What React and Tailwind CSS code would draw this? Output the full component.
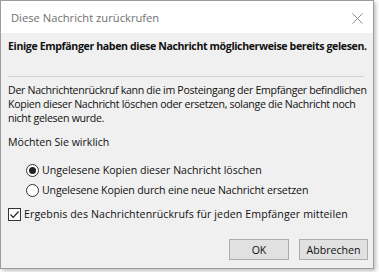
export default function App() {
  return (
    <div className="w-[379px] h-[272px] bg-white overflow-hidden" style={{ fontFamily: '"Open Sans", "Noto Sans", sans-serif' }}>
      <div className="w-[374px] h-[269px] flex flex-col bg-[#f0f0f0] border border-[#9c9c9c] shadow-[2px_2px_4px_rgba(0,0,0,0.25)]">
        {/* Title bar */}
        <div className="h-[32px] bg-white flex items-center justify-between pl-[10px] pr-[10px] shrink-0">
          <span className="text-[11.2px] text-[#6f6f6f] mt-[2px]">Diese Nachricht zurückrufen</span>
          <svg width="11" height="11" viewBox="0 0 11 11" className="mt-[2px]">
            <path d="M0.5 0.5 L10.5 10.5 M10.5 0.5 L0.5 10.5" stroke="#8a8a8a" strokeWidth="1" fill="none" />
          </svg>
        </div>

        <div className="flex flex-col px-[7px] text-[10.6px] text-[#111] leading-[14px] whitespace-nowrap">
          <p className="font-bold mt-[6px] tracking-[-0.38px]">Einige Empfänger haben diese Nachricht möglicherweise bereits gelesen.</p>
          <div className="h-px bg-[#d4d4d4] mt-[23px] mr-[2px]" />
          <p className="mt-[6px] tracking-[-0.3px]">
            Der Nachrichtenrückruf kann die im Posteingang der Empfänger befindlichen
            <br />
            Kopien dieser Nachricht löschen oder ersetzen, solange die Nachricht noch
            <br />
            nicht gelesen wurde.
          </p>
          <p className="mt-[10px]">Möchten Sie wirklich</p>

          <div className="flex flex-col gap-[6px] mt-[14px] pl-[18px]">
            <label className="flex items-center gap-[3px]">
              <span className="w-[13px] h-[13px] rounded-full border border-[#333] bg-white flex items-center justify-center">
                <span className="w-[7px] h-[7px] rounded-full bg-[#222]" />
              </span>
              <span>Ungelesene Kopien dieser Nachricht löschen</span>
            </label>
            <label className="flex items-center gap-[3px]">
              <span className="w-[13px] h-[13px] rounded-full border border-[#333] bg-white" />
              <span className="tracking-[-0.15px]">Ungelesene Kopien durch eine neue Nachricht ersetzen</span>
            </label>
          </div>

          <label className="flex items-center gap-[3px] mt-[10px]">
            <span className="w-[13px] h-[13px] border border-[#333] bg-white flex items-center justify-center">
              <svg width="11" height="11" viewBox="0 0 11 11">
                <path d="M1.5 5.5 L4.2 8.3 L9.5 2.5" stroke="#222" strokeWidth="1.2" fill="none" />
              </svg>
            </span>
            <span className="tracking-[0.1px]">Ergebnis des Nachrichtenrückrufs für jeden Empfänger mitteilen</span>
          </label>

          <div className="flex justify-end gap-[10px] mt-[18px] mr-[-2px]">
            <button className="w-[60px] h-[21px] bg-[#e1e1e1] border border-[#adadad] text-[10.6px]">OK</button>
            <button className="w-[69px] h-[21px] bg-[#e1e1e1] border border-[#adadad] text-[10.6px]">Abbrechen</button>
          </div>
        </div>
      </div>
    </div>
  );
}
